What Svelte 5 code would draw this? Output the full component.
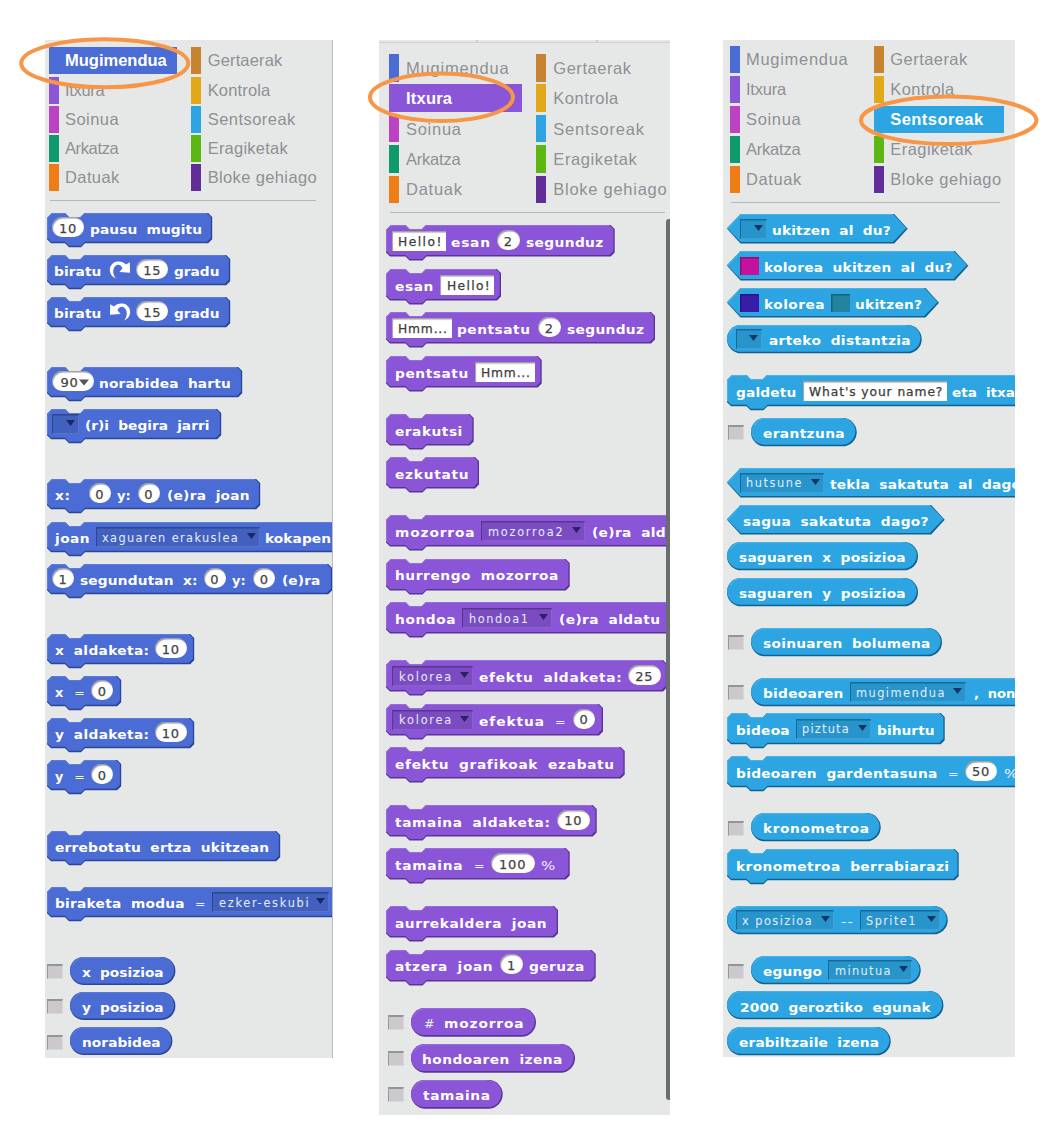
<script>
  // Text runs are [kind, left, right, text]; fields add [.., textLeft, textRight].
  // Kinds: t label, l light label, n number, a angle, s string, d dropdown, c colour, cw/ccw turn icons.
  // Rows are [shape, top, left, right, parts, hasCheckbox].
  const names = ['Mugimendua', 'Itxura', 'Soinua', 'Arkatza', 'Datuak', 'Gertaerak', 'Kontrola', 'Sentsoreak', 'Eragiketak', 'Bloke gehiago'];
  const swatches = ['#4a6cd4', '#8a55d7', '#bb42c3', '#0e9a6c', '#ee7d16', '#c88330', '#e1a91a', '#2ca5e2', '#5cb712', '#632d99'];

  const panels = [
    {
      key: 'motion', x: 45, w: 288, h: 1018, clip: 287, selected: 0,
      color: '#4a6cd4', dark: '#2b4597', light: '#6b88e0',
      cat: { top: 47.3, pitch: 29.3, h: 27, cols: [49.3, 191], text: [65, 207.7], selW: 127.7, base: -1 },
      ends: [166.8, 104.7, 118.7, 118.7, 119.3, 282.3, 270.3, 295.3, 287.7, 316.7],
      rule: [200, 50, 316], stackH: 30.3, repH: 28, boolH: 29, notch: [18, 37.5],
      rows: [
        ['stack', 213.3, 46.5, 211.7, [['n', 52, 84, '10'], ['t', 89.7, 201.7, 'pausu mugitu']]],
        ['stack', 255.3, 46.5, 229.7, [['t', 54.3, 101.7, 'biratu'], ['cw', 109.3, 131.3], ['n', 136.3, 168.3, '15'], ['t', 174.3, 219.7, 'gradu']]],
        ['stack', 297.3, 46.5, 229.7, [['t', 54.3, 101.7, 'biratu'], ['ccw', 108.6, 130.6], ['n', 136.3, 168.3, '15'], ['t', 174.3, 219.7, 'gradu']]],
        ['stack', 367.3, 46.5, 241.7, [['a', 52, 94, '90'], ['t', 99.3, 231, 'norabidea hartu']]],
        ['stack', 409.3, 46.5, 220.7, [['d', 52, 79, '', 58, 60], ['t', 85.3, 209.7, '(r)i begira jarri']]],
        ['stack', 479.3, 46.5, 259.7, [['t', 54.7, 69.7, 'x:'], ['n', 88.7, 110.7, '0'], ['t', 117.3, 131, 'y:'], ['n', 137.7, 160, '0'], ['t', 166.7, 249.3, '(e)ra joan']]],
        ['stack', 522, 46.5, 345, [['t', 54.7, 89.3, 'joan'], ['d', 96, 259.7, 'xaguaren erakuslea', 102.3, 238], ['t', 265.3, 331.3, 'kokapen']]],
        ['stack', 564, 46.5, 331.7, [['n', 52, 74.3, '1'], ['t', 79.7, 197.3, 'segundutan x:'], ['n', 203.7, 226, '0'], ['t', 232.3, 246, 'y:'], ['n', 253.3, 275.3, '0'], ['t', 282, 320.3, '(e)ra']]],
        ['stack', 634.3, 46.5, 193.7, [['t', 54.7, 148.7, 'x aldaketa:'], ['n', 155, 186.7, '10']]],
        ['stack', 676.3, 46.5, 120.7, [['t', 54.7, 63, 'x'], ['l', 74.2, 84.5, '='], ['n', 91.3, 113.3, '0']]],
        ['stack', 718.3, 46.5, 193.7, [['t', 54.7, 148.7, 'y aldaketa:'], ['n', 155, 186.7, '10']]],
        ['stack', 760.3, 46.5, 120.7, [['t', 54.7, 63, 'y'], ['l', 74.2, 84.5, '='], ['n', 91.3, 113.3, '0']]],
        ['stack', 831, 46.5, 279.7, [['t', 54.7, 268.7, 'errebotatu ertza ukitzean']]],
        ['stack', 887.3, 46.5, 345, [['t', 54.7, 184.3, 'biraketa modua'], ['l', 195, 205.3, '='], ['d', 212, 329.3, 'ezker-eskubi', 219, 308.7]]],
        ['rep', 957, 70.3, 175.7, [['t', 81.7, 163.3, 'x posizioa']], true],
        ['rep', 992, 70.3, 175.7, [['t', 81.7, 163.3, 'y posizioa']], true],
        ['rep', 1027.3, 70.3, 172.7, [['t', 81.7, 160.3, 'norabidea']], true]
      ]
    },
    {
      key: 'looks', x: 379, w: 291, h: 1075, clip: 291, selected: 1,
      color: '#8a55d7', dark: '#5a3396', light: '#a57de2',
      cat: { top: 54, pitch: 30.4, h: 27.5, cols: [389, 536], text: [406, 553.3], selW: 133, base: 0 },
      ends: [508.7, 452, 461, 460.7, 462, 631, 618.3, 644, 636.7, 666.7],
      rule: [212, 390, 665], stackH: 31.5, repH: 28.7, boolH: 29, notch: [19.5, 40],
      rows: [
        ['stack', 225.3, 386, 614.7, [['s', 392, 446, 'Hello!', 398.3, 441.7], ['t', 451.3, 490.3, 'esan'], ['n', 496.7, 520, '2'], ['t', 525.7, 603, 'segunduz']]],
        ['stack', 269.3, 386, 501, [['t', 394.7, 433, 'esan'], ['s', 440, 494.3, 'Hello!', 446.7, 489.5]]],
        ['stack', 312.3, 386, 655, [['s', 392, 452, 'Hmm...', 398.3, 447.3], ['t', 457.3, 530.3, 'pentsatu'], ['n', 538, 560.7, '2'], ['t', 566.7, 643.7, 'segunduz']]],
        ['stack', 356, 386, 541.7, [['t', 394.7, 468, 'pentsatu'], ['s', 475, 535, 'Hmm...', 481.3, 530.3]]],
        ['stack', 414, 386, 473.7, [['t', 394.7, 462, 'erakutsi']]],
        ['stack', 457.3, 386, 479, [['t', 394.7, 468.3, 'ezkutatu']]],
        ['stack', 515.3, 386, 690, [['t', 394.7, 474.3, 'mozorroa'], ['d', 481, 585.3, 'mozorroa2', 488, 562.7], ['t', 592.3, 666, '(e)ra ald']]],
        ['stack', 558.7, 386, 569.7, [['t', 394.7, 558, 'hurrengo mozorroa']]],
        ['stack', 602.3, 386, 690, [['t', 394.7, 455.3, 'hondoa'], ['d', 462, 551.7, 'hondoa1', 468.7, 527.7], ['t', 559, 660, '(e)ra aldatu']]],
        ['stack', 660.3, 386, 667, [['d', 392, 473, 'kolorea', 398.7, 451], ['t', 478.7, 621.5, 'efektu aldaketa:'], ['n', 627.7, 661, '25']]],
        ['stack', 704, 386, 603, [['d', 392, 473, 'kolorea', 398.7, 451], ['t', 478.7, 543.7, 'efektua'], ['l', 554.7, 565.3, '='], ['n', 573, 595.3, '0']]],
        ['stack', 747.2, 386, 624.7, [['t', 394.7, 613.3, 'efektu grafikoak ezabatu']]],
        ['stack', 805.2, 386, 596.7, [['t', 394.7, 549.7, 'tamaina aldaketa:'], ['n', 557, 589.7, '10']]],
        ['stack', 848.5, 386, 569.7, [['t', 394.7, 462.3, 'tamaina'], ['l', 473.7, 484.3, '='], ['n', 490.7, 534.7, '100'], ['l', 541.5, 558.5, '%']]],
        ['stack', 906.2, 386, 558, [['t', 394.7, 546.3, 'aurrekaldera joan']]],
        ['stack', 949.7, 386, 595.7, [['t', 394.7, 492.3, 'atzera joan'], ['n', 500, 523, '1'], ['t', 529, 584.3, 'geruza']]],
        ['rep', 1008, 411, 536, [['l', 424, 434.3, '#'], ['t', 443.7, 523.3, 'mozorroa']], true],
        ['rep', 1044, 411, 575, [['t', 422.3, 562.7, 'hondoaren izena']], true],
        ['rep', 1080, 411, 502.7, [['t', 423, 490, 'tamaina']], true]
      ]
    },
    {
      key: 'sensing', x: 723, w: 292, h: 1017, clip: 292, selected: 7,
      color: '#2ca5e2', dark: '#12618d', light: '#5fbdea',
      cat: { top: 46, pitch: 30, h: 27, cols: [730.3, 874], text: [746, 890.3], selW: 129.7, base: -2 },
      ends: [847.7, 786.3, 800.7, 800.7, 801.3, 967.3, 954.3, 983.2, 972.3, 1001.3],
      rule: [201.5, 731, 1000], stackH: 31.3, repH: 28.3, boolH: 29.6, notch: [19.5, 40],
      rows: [
        ['bool', 214, 727.3, 908, [['d', 740.3, 766.7, '', 746, 748], ['t', 772.3, 891, 'ukitzen al du?']]],
        ['bool', 251.2, 727.3, 968.7, [['c', 740.3, 758.7, '#c4119e'], ['t', 763.7, 952.3, 'kolorea ukitzen al du?']]],
        ['bool', 288.2, 727.3, 939.3, [['c', 740.3, 758.7, '#381da6'], ['t', 763.7, 824.3, 'kolorea'], ['c', 831.3, 850, '#22839f'], ['t', 855, 922, 'ukitzen?']]],
        ['rep', 325.3, 727.3, 922, [['d', 736, 762.3, '', 742, 744], ['t', 768.7, 910.3, 'arteko distantzia']]],
        ['stack', 375.2, 727.3, 1040, [['t', 735.7, 796, 'galdetu'], ['s', 803, 946.7, "What's your name?", 809.3, 942.7], ['t', 952, 1015, 'eta itxa']]],
        ['rep', 418, 751.3, 857, [['t', 762.7, 844.3, 'erantzuna']], true],
        ['bool', 468, 727.3, 1040, [['d', 740.3, 823.7, 'hutsune', 746.3, 801.7], ['t', 830, 1021, 'tekla sakatuta al dago']]],
        ['bool', 505, 727.3, 945, [['t', 742.7, 928.3, 'sagua sakatuta dago?']]],
        ['rep', 542.2, 727.3, 918.3, [['t', 738.7, 905.3, 'saguaren x posizioa']]],
        ['rep', 577.8, 727.3, 918.3, [['t', 738.7, 905.3, 'saguaren y posizioa']]],
        ['rep', 628, 751.3, 942.3, [['t', 762.7, 930, 'soinuaren bolumena']], true],
        ['rep', 678, 751.3, 1040, [['t', 762.7, 843, 'bideoaren'], ['d', 849.7, 966.3, 'mugimendua', 856.3, 944.7], ['t', 973.7, 1015, ', non']], true],
        ['stack', 713.3, 727.3, 945, [['t', 735.7, 789.3, 'bideoa'], ['d', 796, 870.7, 'piztuta', 802, 848.7], ['t', 876.7, 934.3, 'bihurtu']]],
        ['stack', 756.2, 727.3, 1040, [['t', 735.7, 937, 'bideoaren gardentasuna'], ['l', 947.8, 958.3, '='], ['n', 965, 997.3, '50'], ['l', 1004.5, 1021.5, '%']]],
        ['rep', 813.2, 751.3, 881, [['t', 762.7, 868.7, 'kronometroa']], true],
        ['stack', 849, 727.3, 959, [['t', 735.7, 948.7, 'kronometroa berrabiarazi']]],
        ['rep', 906, 727.3, 948, [['d', 736, 833.7, 'x posizioa', 742.3, 812], ['l', 840.7, 852.7, '--'], ['d', 859.7, 939.7, 'Sprite1', 866.3, 915.7]]],
        ['rep', 956.2, 751.3, 921, [['t', 762.7, 821.7, 'egungo'], ['d', 828.3, 912.3, 'minutua', 835.3, 890.7]], true],
        ['rep', 991.5, 727.3, 943.7, [['t', 740, 930.7, '2000 geroztiko egunak']]],
        ['rep', 1027, 727.3, 891, [['t', 738.7, 878.7, 'erabiltzaile izena']]]
      ]
    }
  ];

  // Spread a label over the width of its box: widen the glyphs a little first,
  // then share what is left between the letters.
  function fit(node, [width, maxScale]) {
    const inner = node.firstElementChild;
    const count = inner.textContent.length;
    if (count < 1) return;
    const natural = inner.getBoundingClientRect().width;
    const scale = Math.min(maxScale, Math.max(1, width / natural));
    if (count > 1) inner.style.letterSpacing = `${(width / scale - natural) / (count - 1)}px`;
    inner.style.transform = `scaleX(${scale})`;
  }

  function heightOf(p, shape) {
    return shape === 'stack' ? p.stackH : shape === 'rep' ? p.repH : p.boolH;
  }

  function outline(p, shape, w, h) {
    if (shape === 'rep') {
      const r = h / 2;
      return `M${r} 0H${w - r}A${r} ${r} 0 0 1 ${w - r} ${h}H${r}A${r} ${r} 0 0 1 ${r} 0Z`;
    }
    if (shape === 'bool') {
      const s = 13.5;
      return `M0 ${h / 2}L${s} 0H${w - s}L${w} ${h / 2}L${w - s} ${h}H${s}Z`;
    }
    const [a, b] = p.notch;
    return `M0 5L5 0H${a}l4 4H${b - 4}l4 -4H${w - 4}l4 4V${h - 4}l-4 4H${b + 0.5}l-4 4H${a + 4}l-4 -4H4l-4 -4Z`;
  }

  function topEdge(p, shape, w, h) {
    if (shape === 'rep') return `M3 ${h / 2 - 6}Q7 .7 ${h / 2} .7H${w - h / 2}`;
    if (shape === 'bool') return `M1 ${h / 2}L13.5 .6H${w - 13.5}`;
    const [a, b] = p.notch;
    return `M.6 ${h - 5}V5L5 .6H${a}l4 4H${b - 4}l4 -4H${w - 4}`;
  }

  const before = (parts, i, left) => parts[i][1] - (i ? parts[i - 1][2] : left);
  const rowHeight = (p, i) => (i < p.rows.length - 1 ? p.rows[i + 1][1] : 40 + p.h) - p.rows[i][1];
</script>

<main>
  {#each panels as p}
    <section class="panel {p.key}" style:width="{p.w}px" style:height="{p.h}px" style:--c={p.color}>
      {#if p.key === 'looks'}<div class="tabs"><i></i><i></i><i></i></div>{/if}
      <div class="cats" style:margin-top="{p.cat.top - 40 - (p.key === 'looks' ? 3 : 0)}px" style:height="{p.rule[0] - p.cat.top}px">
        {#each [0, 1] as col}
          <div class="col" style:margin-left="{col ? 0 : p.cat.cols[0] - p.x}px" style:width="{p.cat.cols[1] - p.cat.cols[0]}px">
            {#each names.slice(col * 5, col * 5 + 5) as name, i}
              {@const k = col * 5 + i}
              <div class="cat" class:selected={k === p.selected} style:height="{p.cat.h}px" style:margin-bottom="{p.cat.pitch - p.cat.h}px" style:width={k === p.selected ? `${p.cat.selW}px` : 'auto'}>
                <i style:background={swatches[k]}></i>
                <span class="name" style:margin-left="{p.cat.text[col] - p.cat.cols[col] - 9.7}px" style:margin-top="{p.cat.base}px" use:fit={[p.ends[k] - p.cat.text[col], 1]}><b>{name}</b></span>
              </div>
            {/each}
          </div>
        {/each}
      </div>
      <hr style:margin-left="{p.rule[1] - p.x}px" style:width="{p.rule[2] - p.rule[1]}px" />
      <div class="palette" style:width="{p.clip}px" style:padding-top="{p.rows[0][1] - p.rule[0] - 1}px">
        {#each p.rows as [shape, , left, right, parts, check], i}
          {@const w = right - left}
          {@const h = heightOf(p, shape)}
          <div class="row" style:height="{rowHeight(p, i)}px">
            {#if check}
              <span class="check" style:margin-left="{left - p.x - 23}px"></span>
            {/if}
            <div class="block" style:margin-left="{check ? 7 : left - p.x}px" style:width="{w}px" style:height="{h}px">
              <svg class="shape" width={w} height={h}>
                <path d={outline(p, shape, w, h)} fill={p.dark} />
                <path d={outline(p, shape, w - 1.3, h - 1.6)} fill={p.color} />
                <path d={topEdge(p, shape, w - 1.3, h)} fill="none" stroke={p.light} stroke-width="1" opacity=".65" />
              </svg>
              <div class="parts">
                {#each parts as [kind, x0, x1, text, t0, t1], j}
                  <div class="part {kind}" style:margin-left="{before(parts, j, left)}px" style:width="{x1 - x0}px" style:background-color={kind === 'c' ? text : null}>
                    {#if kind === 't' || kind === 'l'}
                      <span use:fit={[x1 - x0, kind === 't' ? 1.1 : 1.2]}><b>{text}</b></span>
                    {:else if kind === 'n'}
                      <b>{text}</b>
                    {:else if kind === 'a'}
                      <b>{text}</b><svg width="10" height="7"><path d="M0 .5H10L5 6.5Z" fill="#555" /></svg>
                    {:else if kind === 's' || kind === 'd'}
                      <span style:margin-left="{t0 - x0}px" use:fit={[t1 - t0, 1.05]}><b>{text}</b></span>
                      {#if kind === 'd'}<svg class="arrow" width="9" height="6"><path d="M0 0H9L4.5 6Z" fill="#0a1340" fill-opacity=".72" /></svg>{/if}
                    {:else if kind === 'cw' || kind === 'ccw'}
                      <svg width="22" height="20" viewBox="0 0 22 20">
                        <path d="M7 18.500C-1.500 15.500 -1 4 7 1.800C11 .8 14.500 2 17 4.500L20.800 2.300L21 12.800L10.500 12L13.500 8.200C12 5.200 10 4.200 7.500 5.200C3.500 7.200 3 14 7 18.500Z" fill="#fff" />
                      </svg>
                    {/if}
                  </div>
                {/each}
              </div>
            </div>
          </div>
        {/each}
      </div>
      {#if p.key === 'looks'}<div class="scroll"></div>{/if}
    </section>
  {/each}
  <svg class="marks" width="1046" height="160" fill="none" stroke="#f79646" stroke-width="4">
    <ellipse cx="104.700" cy="63.300" rx="83.500" ry="24" />
    <ellipse cx="441.500" cy="97.300" rx="71.500" ry="23.700" />
    <ellipse cx="948.700" cy="120.300" rx="87.700" ry="23.700" />
  </svg>
</main>

<style>
  :global(body) { background: #fff; }
  main {
    position: relative;
    box-sizing: border-box;
    display: flex;
    align-items: flex-start;
    width: 1046px;
    height: 1144px;
    padding: 40px 0 0 45px;
    overflow: hidden;
    font-family: 'DejaVu Sans', Verdana, sans-serif;
  }
  b { display: inline-block; font-weight: inherit; white-space: pre; transform-origin: 0 50%; }
  i { display: block; }
  .panel { position: relative; flex: none; overflow: hidden; background: #e6e8e8; }
  .motion { box-shadow: inset -1px 0 #b9bbbc; margin-right: 46px; }
  .looks { margin-right: 53px; }
  .tabs { display: flex; gap: 2px; height: 3px; background: #cdcfd0; }
  .tabs i { height: 1.500px; background: #e6e8e8; width: 97px; }
  .tabs i:nth-child(2) { width: 118px; }
  .tabs i:nth-child(3) { flex: 1; }
  .cats { display: flex; }
  .col { flex: none; }
  .cat {
    display: flex;
    align-items: center;
    color: #8e9093;
    font: 16.500px 'Liberation Sans', Arial, sans-serif;
    line-height: 26px;
  }
  .cat i { flex: none; width: 9.700px; height: 100%; }
  .cat.selected { background: var(--c); color: #fff; font-weight: bold; }
  .name { width: 0; white-space: nowrap; }
  hr { height: 1px; margin: 0; border: 0; background: #b4b6b7; }
  .palette { overflow: hidden; }
  .row { display: flex; align-items: flex-start; }
  .check {
    flex: none;
    box-sizing: border-box;
    width: 16px;
    height: 15px;
    margin-top: 7.500px;
    background: #cbc9cc;
    border: 1px solid #d9d9db;
    border-top: 2px solid #949496;
    border-left-color: #98989a;
  }
  .block { display: grid; flex: none; grid-template-rows: 100%; }
  .shape { grid-area: 1 / 1; overflow: visible; }
  .parts { grid-area: 1 / 1; display: flex; align-items: center; height: 100%; z-index: 1; }
  .part {
    box-sizing: border-box;
    display: flex;
    flex: none;
    align-items: center;
    height: 20px;
    white-space: nowrap;
  }
  .t, .l { padding-top: 3px; color: #fff; font-size: 12.500px; line-height: 17px; }
  .t span, .l span { width: 0; }
  .t { font-weight: bold; word-spacing: 4px; }
  .l { color: #eef2ff; }
  .n, .a {
    justify-content: center;
    margin-top: -2px;
    border-radius: 10px;
    background: #fff;
    box-shadow: inset 1px 1.500px 1px rgba(60, 60, 60, .5);
    color: #444;
    font-size: 13px;
    letter-spacing: .8px;
    padding-top: 2px;
    -webkit-text-stroke: .25px #444;
  }
  .a { padding-left: 3px; }
  .s {
    background: #fff;
    box-shadow: inset 1px 1.500px 1px rgba(60, 60, 60, .5);
    color: #3c3c3c;
    font: 13px 'DejaVu Sans Condensed', 'DejaVu Sans', sans-serif;
    font-stretch: condensed;
    -webkit-text-stroke: .25px #3c3c3c;
  }
  .d {
    background: rgba(0, 0, 0, .1);
    box-shadow: inset 1px 1.500px 0 rgba(0, 0, 0, .28), inset -1px -1px 0 rgba(255, 255, 255, .12);
    color: #e6edfc;
    font: 12px 'DejaVu Sans Condensed', 'DejaVu Sans', sans-serif;
    font-stretch: condensed;
  }
  .s span, .d span { width: 0; padding-top: 1px; }
  .arrow { margin: 0 4px 2px auto; }
  .c { height: 18.500px; box-shadow: inset 1.500px 1.500px 0 rgba(0, 0, 0, .25); }
  .ccw { transform: scaleX(-1); }
  .scroll {
    position: absolute;
    top: 179px;
    right: -2px;
    width: 6px;
    height: 881px;
    border-radius: 3px;
    background: #6b6c70;
  }
  .marks { position: absolute; top: 0; left: 0; z-index: 2; }
</style>
